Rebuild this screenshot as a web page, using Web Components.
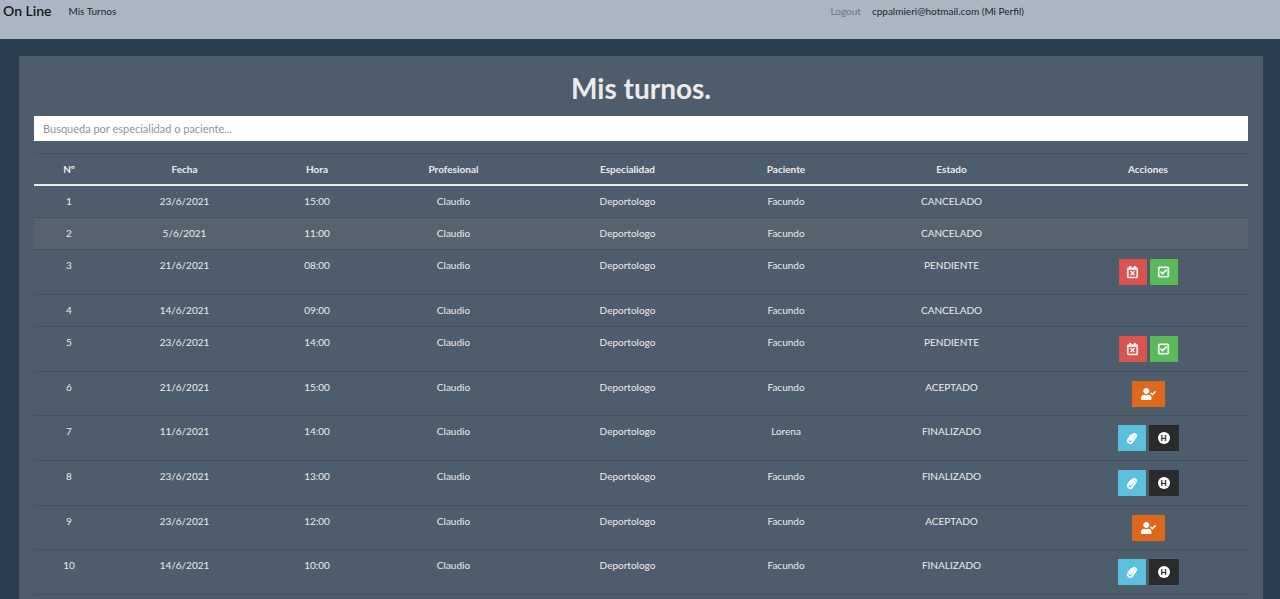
<!DOCTYPE html>
<html lang="es">
<head>
<meta charset="utf-8">
<meta name="viewport" content="width=device-width, initial-scale=1">
<title>Mis turnos</title>
<style>
  body { margin: 0; min-height: 100vh; display: flex; flex-direction: column; background: #2b3e50; color: #ebebeb; font: 10px/16px Lato, sans-serif; }
  content-panel { flex: 1; }
</style>
</head>
<body>
<nav-bar></nav-bar>
<content-panel>
  <span slot="title">Mis turnos.</span>
  <search-box></search-box>
  <turnos-table></turnos-table>
</content-panel>
<script>
class Base extends HTMLElement {
  constructor() {
    super();
    this.attachShadow({ mode: 'open' });
  }
  connectedCallback() { this.shadowRoot.innerHTML = this.render(); }
}

customElements.define('nav-bar', class extends Base {
  render() {
    return `<style>
      :host { display: block; background: #abb6c2; }
      nav { display: flex; align-items: center; height: 22px; padding: 0 20% 17px 3px; }
      a { color: #20262d; text-decoration: none; }
      .brand { font-size: 14px; font-weight: 600; color: #10161c; margin-right: 17px; }
      .logout { color: #6d7783; margin-left: auto; margin-right: 11px; }
    </style>
    <nav>
      <a class="brand" href="#">On Line</a>
      <a href="#turnos">Mis Turnos</a>
      <a class="logout" href="#logout">Logout</a>
      <a href="#perfil">cppalmieri@hotmail.com (Mi Perfil)</a>
    </nav>`;
  }
});

customElements.define('content-panel', class extends Base {
  render() {
    return `<style>
      :host { display: block; margin: 17px 17px 0 19px; padding: 0 15px; background: #4e5d6c; }
      h1 { margin: 0; padding: 14px 0 10px; font-size: 28px; line-height: 36px; font-weight: 700; text-align: center; }
    </style>
    <h1><slot name="title"></slot></h1><slot></slot>`;
  }
});

customElements.define('search-box', class extends Base {
  render() {
    return `<style>
      :host { display: block; margin-bottom: 12px; }
      input { display: block; box-sizing: border-box; width: 100%; height: 25px; padding: 0 9px; border: 0; border-radius: 0; background: #fff; color: #2b3e50; font: inherit; font-size: 11px; }
      input::placeholder { color: #8c959e; opacity: 1; }
    </style>
    <input type="text" aria-label="Busqueda" placeholder="Busqueda por especialidad o paciente...">`;
  }
});

const ICONS = {
  cancel: ['0 0 448 512', 11, 12, '<path d="M311.7 374.7l-17 17c-4.7 4.7-12.3 4.7-17 0L224 337.9l-53.7 53.7c-4.7 4.7-12.3 4.7-17 0l-17-17c-4.7-4.7-4.7-12.3 0-17l53.7-53.7-53.7-53.7c-4.7-4.7-4.7-12.3 0-17l17-17c4.7-4.7 12.3-4.7 17 0l53.7 53.7 53.7-53.7c4.7-4.7 12.3-4.7 17 0l17 17c4.7 4.7 4.7 12.3 0 17L257.9 304l53.7 53.7c4.8 4.7 4.8 12.3.1 17zM448 112v352c0 26.5-21.5 48-48 48H48c-26.5 0-48-21.5-48-48V112c0-26.5 21.5-48 48-48h48V12c0-6.6 5.4-12 12-12h40c6.6 0 12 5.4 12 12v52h128V12c0-6.6 5.4-12 12-12h40c6.600 0 12 5.400 12 12v52h48c26.500 0 48 21.500 48 48zm-48 346V160H48v298c0 3.300 2.700 6 6 6h340c3.300 0 6-2.700 6-6z" stroke="#fff" stroke-width="16"/>'],
  accept: ['0 0 448 512', 11, 12, '<path d="M400 32H48C21.49 32 0 53.49 0 80v352c0 26.51 21.49 48 48 48h352c26.51 0 48-21.49 48-48V80c0-26.51-21.49-48-48-48zm0 400H48V80h352v352zm-35.864-241.724L191.547 361.48c-4.705 4.667-12.303 4.637-16.97-.068l-90.781-91.516c-4.667-4.705-4.637-12.303.069-16.971l22.719-22.536c4.705-4.667 12.303-4.637 16.97.069l59.792 60.277 141.352-140.216c4.705-4.667 12.303-4.637 16.97.068l22.536 22.718c4.667 4.706 4.637 12.304-.068 16.971z" stroke="#fff" stroke-width="16"/>'],
  attend: ['0 0 640 512', 15, 12, '<path d="M224 256c70.7 0 128-57.3 128-128S294.7 0 224 0 96 57.3 96 128s57.3 128 128 128zm89.6 32h-16.7c-22.2 10.2-46.9 16-72.9 16s-50.6-5.8-72.9-16h-16.7C60.2 288 0 348.2 0 422.4V464c0 26.5 21.5 48 48 48h352c26.5 0 48-21.5 48-48v-41.6c0-74.2-60.2-134.4-134.4-134.4zM636.6 159.6l-27.8-28.2c-4.6-4.7-12.1-4.7-16.8-.1L487.1 235.4l-45.6-45.9c-4.6-4.7-12.1-4.7-16.8-.1l-28.1 27.9c-4.7 4.6-4.7 12.1-.1 16.8l81.7 82.3c4.6 4.7 12.1 4.7 16.8.1l141.3-140.2c4.7-4.7 4.8-12.2.3-16.7z"/>'],
  attach: ['0 0 24 24', 12, 12, '<path d="M16 8l-5.500 7.500a1.600 1.600 0 0 1-2.600-1.900l5.600-8.200a3.700 3.700 0 0 1 6.200 4.200l-7 10.400a4.900 4.900 0 0 1-8.200-5.400l5.500-8.200" fill="none" stroke="#fff" stroke-width="3.400" stroke-linecap="round"/>']
};
const LABELS = { cancel: 'Cancelar', accept: 'Aceptar', attend: 'Atender', attach: 'Adjuntar', history: 'Historia' };

customElements.define('action-button', class extends Base {
  render() {
    const kind = this.getAttribute('kind');
    let icon = '<span>H</span>';
    if (ICONS[kind]) {
      const [box, w, h, shape] = ICONS[kind];
      icon = `<svg viewBox="${box}" width="${w}" height="${h}" fill="#fff" aria-hidden="true">${shape}</svg>`;
    }
    return `<style>
      :host { display: block; }
      button { display: flex; align-items: center; justify-content: center; width: 28px; height: 26px; padding: 0; border: 0; border-radius: 0; font: inherit; cursor: pointer; }
      svg { overflow: visible; }
      .cancel { background: #d9534f; }
      .accept { background: #5cb85c; }
      .attend { background: #df691a; width: 33px; }
      .attach { background: #5bc0de; }
      .history { background: #292b2c; width: 30px; }
      span { width: 12px; height: 12px; border-radius: 50%; background: #fff; color: #292b2c; font-size: 8px; line-height: 12px; font-weight: 900; text-align: center; }
    </style>
    <button type="button" class="${kind}" aria-label="${LABELS[kind]}">${icon}</button>`;
  }
});

const TURNOS = [
  ['23/6/2021', '15:00', 'Facundo', 'CANCELADO'],
  ['5/6/2021', '11:00', 'Facundo', 'CANCELADO'],
  ['21/6/2021', '08:00', 'Facundo', 'PENDIENTE'],
  ['14/6/2021', '09:00', 'Facundo', 'CANCELADO'],
  ['23/6/2021', '14:00', 'Facundo', 'PENDIENTE'],
  ['21/6/2021', '15:00', 'Facundo', 'ACEPTADO'],
  ['11/6/2021', '14:00', 'Lorena', 'FINALIZADO'],
  ['23/6/2021', '13:00', 'Facundo', 'FINALIZADO'],
  ['23/6/2021', '12:00', 'Facundo', 'ACEPTADO'],
  ['14/6/2021', '10:00', 'Facundo', 'FINALIZADO']
];
const ACTIONS = { CANCELADO: [], PENDIENTE: ['cancel', 'accept'], ACEPTADO: ['attend'], FINALIZADO: ['attach', 'history'] };

customElements.define('turnos-table', class extends Base {
  render() {
    const cols = [70, 161, 104, 169, 179, 138, 193, 200];
    const heads = ['Nº', 'Fecha', 'Hora', 'Profesional', 'Especialidad', 'Paciente', 'Estado', 'Acciones'];
    const rows = TURNOS.map(([fecha, hora, paciente, estado], i) => `
      <tr class="${estado.toLowerCase()}">
        <td>${i + 1}</td><td>${fecha}</td><td>${hora}</td><td>Claudio</td><td>Deportologo</td><td>${paciente}</td><td>${estado}</td>
        <td><div>${ACTIONS[estado].map(k => `<action-button kind="${k}"></action-button>`).join('')}</div></td>
      </tr>`).join('');
    return `<style>
      :host { display: block; }
      table { width: 100%; table-layout: fixed; border-spacing: 0; text-align: center; }
      th, td { box-sizing: border-box; padding: 7px 0 0; vertical-align: top; }
      th { height: 33px; font-weight: 700; border-top: 1px solid #44535f; border-bottom: 2px solid #ebebeb; }
      td { height: 45px; border-bottom: 1px solid #435260; }
      .cancelado td { height: 32px; }
      .aceptado td { height: 44px; }
      tbody tr:nth-child(2) { background: #56636f; }
      td:last-child { padding-top: 9px; }
      div { display: flex; justify-content: center; gap: 3px; }
    </style>
    <table>
      <colgroup>${cols.map(w => `<col style="width:${w}px">`).join('')}</colgroup>
      <thead><tr>${heads.map(h => `<th scope="col">${h}</th>`).join('')}</tr></thead>
      <tbody>${rows}</tbody>
    </table>`;
  }
});
</script>
</body>
</html>
